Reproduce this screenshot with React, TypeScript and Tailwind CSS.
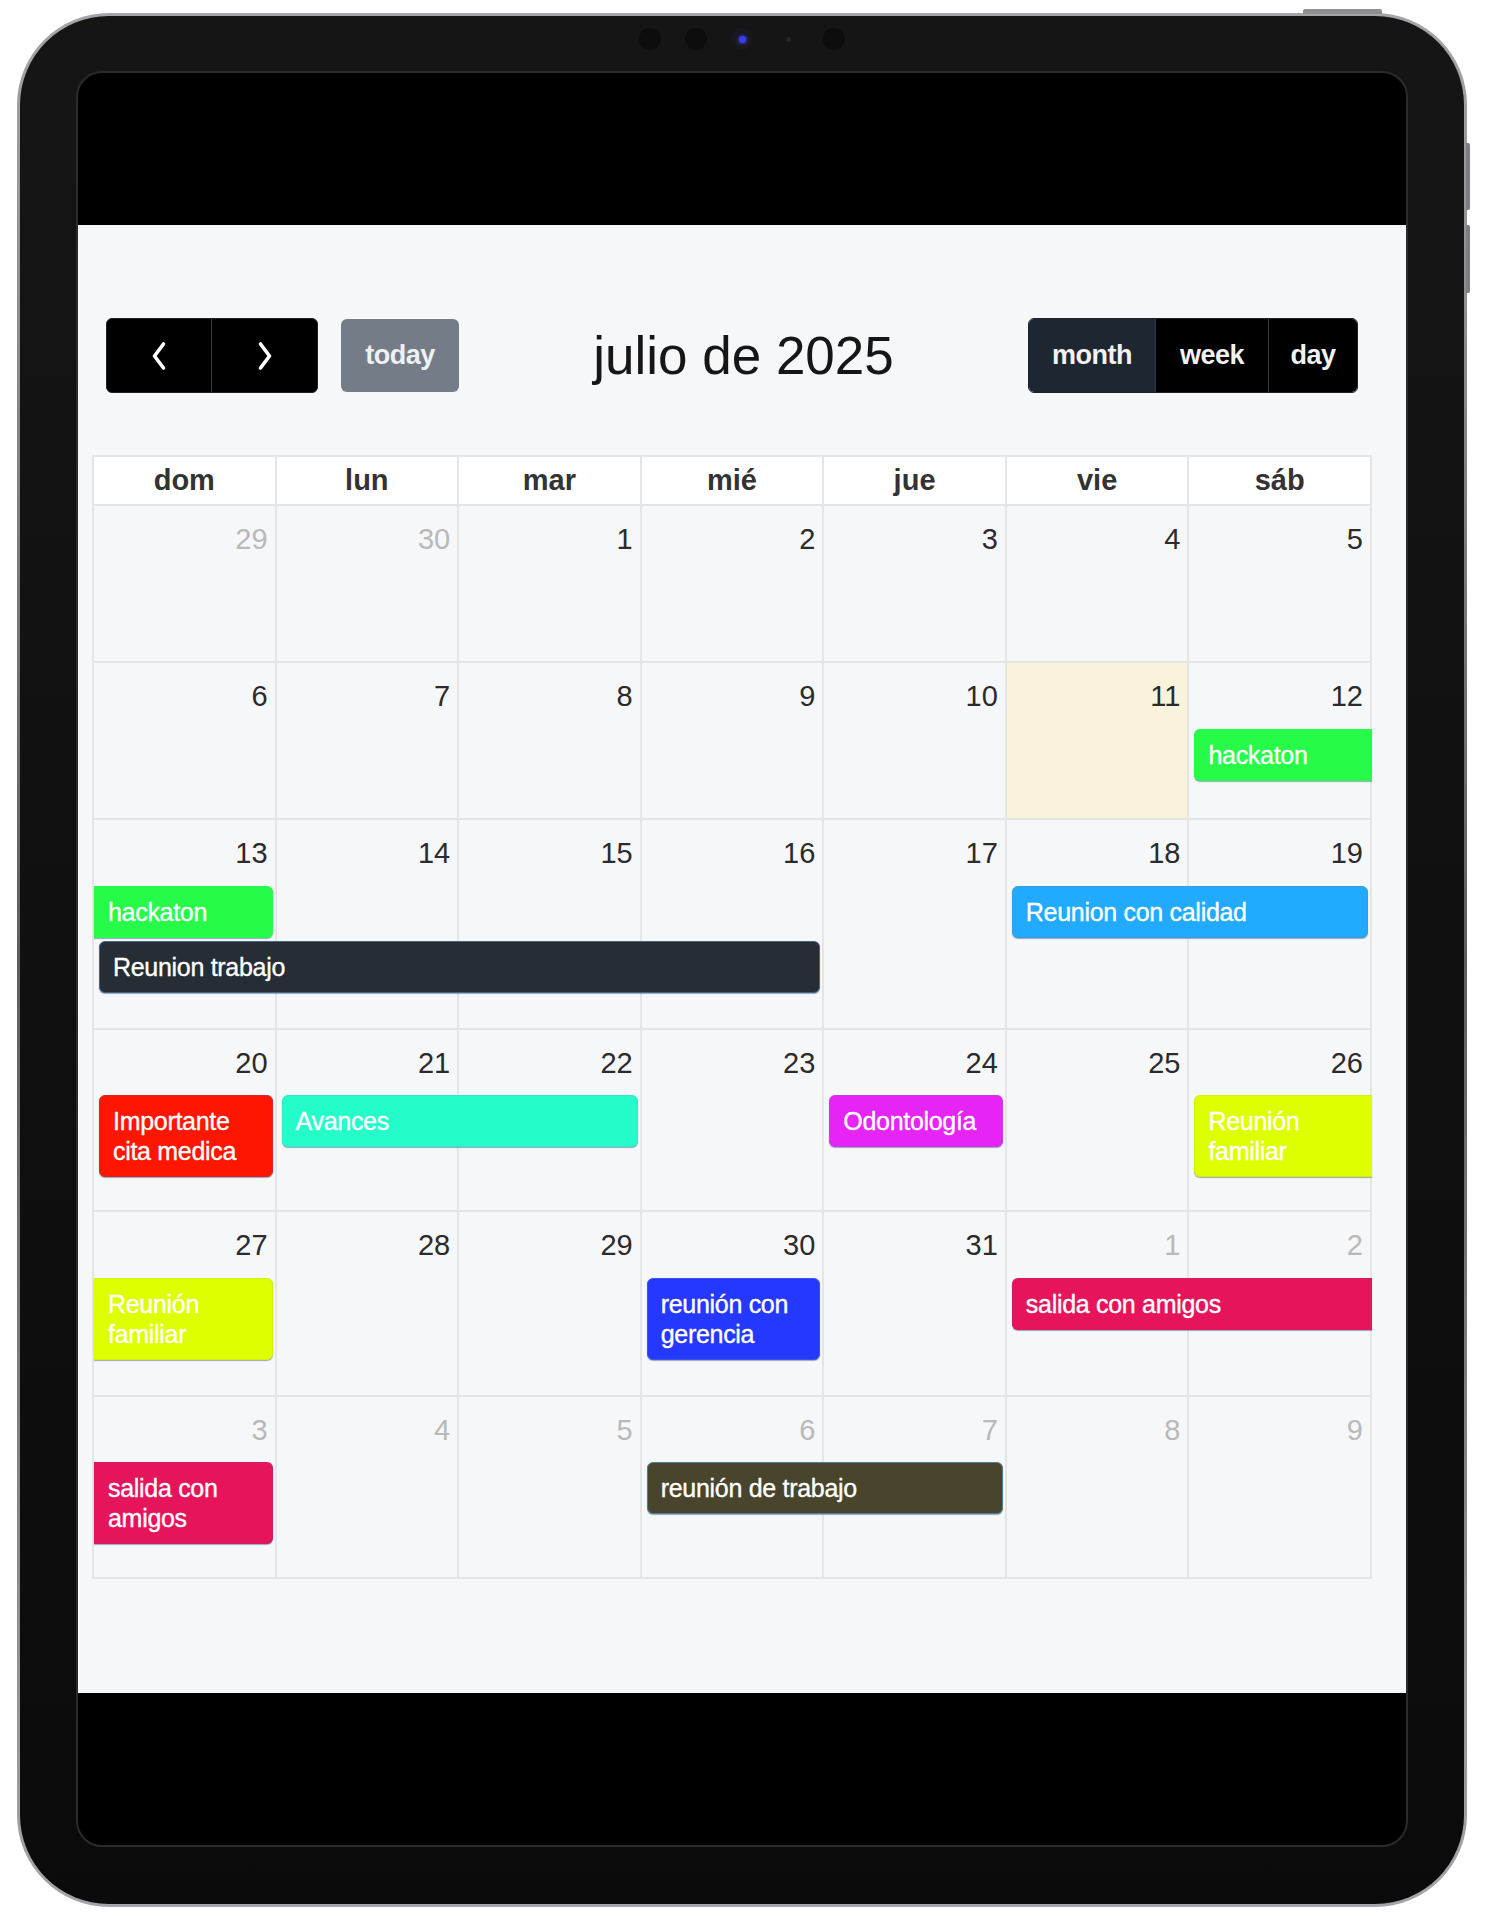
import React from 'react';

type Ev = {
  title: string;
  col: number;
  span: number;
  row: number;
  bg: string;
  border: string;
  contL?: boolean;
  contR?: boolean;
};

type Day = { n: number; o?: boolean; today?: boolean };

const colStart: Record<number, string> = {
  1: 'col-start-1',
  2: 'col-start-2',
  3: 'col-start-3',
  4: 'col-start-4',
  5: 'col-start-5',
  6: 'col-start-6',
  7: 'col-start-7',
};
const colSpan: Record<number, string> = {
  1: 'col-span-1',
  2: 'col-span-2',
  3: 'col-span-3',
  4: 'col-span-4',
};
const rowStart: Record<number, string> = {
  2: 'row-start-2',
  3: 'row-start-3',
};

const mk = (ns: number[], other: (n: number, i: number) => boolean, todayIdx = -1): Day[] =>
  ns.map((n, i) => ({ n, o: other(n, i), today: i === todayIdx }));

const weeks: { days: Day[]; events: Ev[]; rows: string }[] = [
  {
    days: mk([29, 30, 1, 2, 3, 4, 5], (_n, i) => i < 2),
    events: [],
    rows: 'grid-rows-[66px_auto_auto_minmax(32px,1fr)]',
  },
  {
    days: mk([6, 7, 8, 9, 10, 11, 12], () => false, 5),
    events: [
      { title: 'hackaton', col: 7, span: 1, row: 2, bg: 'bg-[#25fb48]', border: 'border-[#25fb48]', contR: true },
    ],
    rows: 'grid-rows-[66px_auto_auto_minmax(32px,1fr)]',
  },
  {
    days: mk([13, 14, 15, 16, 17, 18, 19], () => false),
    events: [
      { title: 'hackaton', col: 1, span: 1, row: 2, bg: 'bg-[#25fb48]', border: 'border-[#25fb48]', contL: true },
      { title: 'Reunion con calidad', col: 6, span: 2, row: 2, bg: 'bg-[#22aaff]', border: 'border-[#3a9be0]' },
      { title: 'Reunion trabajo', col: 1, span: 4, row: 3, bg: 'bg-[#262d35]', border: 'border-[#3f6787]' },
    ],
    rows: 'grid-rows-[66px_auto_auto_minmax(32px,1fr)]',
  },
  {
    days: mk([20, 21, 22, 23, 24, 25, 26], () => false),
    events: [
      { title: 'Importante cita medica', col: 1, span: 1, row: 2, bg: 'bg-[#ff1600]', border: 'border-[#e0222a]' },
      { title: 'Avances', col: 2, span: 2, row: 2, bg: 'bg-[#24fdca]', border: 'border-[#2ee8c8]' },
      { title: 'Odontología', col: 5, span: 1, row: 2, bg: 'bg-[#e524f5]', border: 'border-[#c63be8]' },
      { title: 'Reunión familiar', col: 7, span: 1, row: 2, bg: 'bg-[#ddff00]', border: 'border-[#d2f20a]', contR: true },
    ],
    rows: 'grid-rows-[65px_auto_auto_minmax(30px,1fr)]',
  },
  {
    days: mk([27, 28, 29, 30, 31, 1, 2], (_n, i) => i > 4),
    events: [
      { title: 'Reunión familiar', col: 1, span: 1, row: 2, bg: 'bg-[#ddff00]', border: 'border-[#d2f20a]', contL: true },
      { title: 'reunión con gerencia', col: 4, span: 1, row: 2, bg: 'bg-[#2538ff]', border: 'border-[#3a55e6]' },
      { title: 'salida con amigos', col: 6, span: 2, row: 2, bg: 'bg-[#e5145b]', border: 'border-[#d41a63]', contR: true },
    ],
    rows: 'grid-rows-[66px_auto_auto_minmax(32px,1fr)]',
  },
  {
    days: mk([3, 4, 5, 6, 7, 8, 9], () => true),
    events: [
      { title: 'salida con amigos', col: 1, span: 1, row: 2, bg: 'bg-[#e5145b]', border: 'border-[#d41a63]', contL: true },
      { title: 'reunión de trabajo', col: 4, span: 2, row: 2, bg: 'bg-[#49442c]', border: 'border-[#4e7e98]' },
    ],
    rows: 'grid-rows-[65px_auto_auto_minmax(30px,1fr)]',
  },
];

const dayNames = ['dom', 'lun', 'mar', 'mié', 'jue', 'vie', 'sáb'];

function Chevron({ dir }: { dir: 'l' | 'r' }) {
  return (
    <svg width="16" height="30" viewBox="0 0 16 30" fill="none">
      <path
        d={dir === 'l' ? 'M12.5 3 L3.5 15 L12.5 27' : 'M3.5 3 L12.5 15 L3.5 27'}
        stroke="white"
        strokeWidth="3.6"
        strokeLinecap="round"
        strokeLinejoin="round"
      />
    </svg>
  );
}

function EventBar({ e }: { e: Ev }) {
  const cls = [
    colStart[e.col],
    colSpan[e.span],
    rowStart[e.row],
    e.bg,
    e.border,
    'self-start mb-[3px] border text-white text-[25px] leading-[30px] py-[10px] px-[13px] tracking-[-0.3px] [-webkit-text-stroke:0.35px_white] shadow-[0_1px_1px_rgba(40,70,110,0.45)]',
    e.contL ? 'ml-0 rounded-l-none border-l-0 pl-[14px]' : 'ml-[5px] rounded-l-[6px]',
    e.contR ? 'mr-0 rounded-r-none border-r-0' : 'mr-[4px] rounded-r-[6px]',
  ].join(' ');
  return <div className={cls}>{e.title}</div>;
}

function Week({ w }: { w: { days: Day[]; events: Ev[]; rows: string } }) {
  return (
    <div className={['grid grid-cols-7 min-h-[157px] border-b-2 border-[#e5e5e6]', w.rows].join(' ')}>
      {w.days.map((d, i) => (
        <div
          key={i}
          className={[
            colStart[i + 1],
            'row-start-1 row-span-4 border-r-2 border-[#e5e5e6] text-right pr-[7px] pt-[15px]',
            d.today ? 'bg-[#f8f3da]' : '',
          ].join(' ')}
        >
          <span className={['text-[29px] leading-[36px]', d.o ? 'text-[#b9b9b9]' : 'text-[#2b2b2b]'].join(' ')}>{d.n}</span>
        </div>
      ))}
      {w.events.map((e, i) => (
        <EventBar key={i} e={e} />
      ))}
    </div>
  );
}

export default function App() {
  return (
    <div className="relative w-[1485px] h-[1920px] bg-white overflow-hidden font-['Liberation_Sans',Arial,sans-serif]">
      <div className="relative ml-[17px] mt-[13px] w-[1450px] h-[1894px] rounded-[92px] p-[3px] bg-linear-to-b from-[#a4a4a9] via-[#5d5d62] to-[#a4a4a9]">
        <div className="absolute left-[1286px] -top-[4px] w-[79px] h-[5px] rounded-t-[2px] bg-[#8e8e93]" />
        <div className="absolute -right-[3px] top-[130px] w-[4px] h-[67px] rounded-r-[2px] bg-[#7d7d82]" />
        <div className="absolute -right-[3px] top-[212px] w-[4px] h-[68px] rounded-r-[2px] bg-[#7d7d82]" />
        <div className="relative h-full w-full rounded-[89px] bg-linear-to-b from-[#151515] to-[#0b0b0b] pt-[55px] px-[56px] pb-[57px]">
          <div className="absolute top-[12px] left-1/2 -translate-x-1/2 flex items-center gap-[24px]">
            <div className="w-[22px] h-[22px] rounded-full bg-[#0d0d0d]" />
            <div className="w-[22px] h-[22px] rounded-full bg-[#0d0d0d]" />
            <div className="w-[22px] h-[22px] rounded-full bg-[#18181d] flex items-center justify-center">
              <div className="w-[7px] h-[7px] rounded-full bg-[#3b3cf0] shadow-[0_0_4px_#4a4aff]" />
            </div>
            <div className="w-[22px] h-[22px] flex items-center justify-center">
              <div className="w-[5px] h-[5px] rounded-full bg-[#262626]" />
            </div>
            <div className="w-[22px] h-[22px] rounded-full bg-[#0d0d0d]" />
          </div>
          <div className="h-full rounded-[26px] border-2 border-[#2b2b2b] bg-black overflow-hidden flex flex-col">
            <div className="h-[152px] shrink-0" />
            <div className="h-[1468px] shrink-0 bg-[#f6f7f9] pt-[93px] pl-[14px] pr-[34px]">
              <div className="h-[75px] flex items-center justify-between px-[14px]">
                <div className="flex items-center gap-[23px]">
                  <div className="flex h-[75px] rounded-[6px] overflow-hidden border border-[#1c232b] bg-black">
                    <div className="w-[105px] flex items-center justify-center border-r border-[#2e3945]">
                      <Chevron dir="l" />
                    </div>
                    <div className="w-[105px] flex items-center justify-center">
                      <Chevron dir="r" />
                    </div>
                  </div>
                  <div className="w-[118px] h-[73px] rounded-[6px] bg-[#747d87] flex items-center justify-center text-[27px] font-bold text-[#eef0f2] tracking-[-0.5px]">
                    today
                  </div>
                </div>
                <div className="text-[53px] leading-none text-[#161616]">julio de 2025</div>
                <div className="flex h-[75px] rounded-[6px] overflow-hidden border border-[#1c232b] text-[27px] font-bold text-[#f2f2f2] tracking-[-0.5px]">
                  <div className="w-[127px] flex items-center justify-center bg-[#1e2731] border-r border-[#2e3945]">month</div>
                  <div className="w-[113px] flex items-center justify-center bg-black border-r border-[#2e3945]">week</div>
                  <div className="w-[88px] flex items-center justify-center bg-black">day</div>
                </div>
              </div>
              <div className="mt-[62px] w-[1280px] border-l-2 border-[#e5e5e6]">
                <div className="grid grid-cols-7 h-[51px] bg-white border-t-2 border-b-2 border-[#e5e5e6]">
                  {dayNames.map((d) => (
                    <div
                      key={d}
                      className="border-r-2 border-[#e5e5e6] flex items-center justify-center text-[29px] font-bold text-[#333]"
                    >
                      {d}
                    </div>
                  ))}
                </div>
                {weeks.map((w, i) => (
                  <Week key={i} w={w} />
                ))}
              </div>
            </div>
            <div className="flex-1" />
          </div>
        </div>
      </div>
    </div>
  );
}
